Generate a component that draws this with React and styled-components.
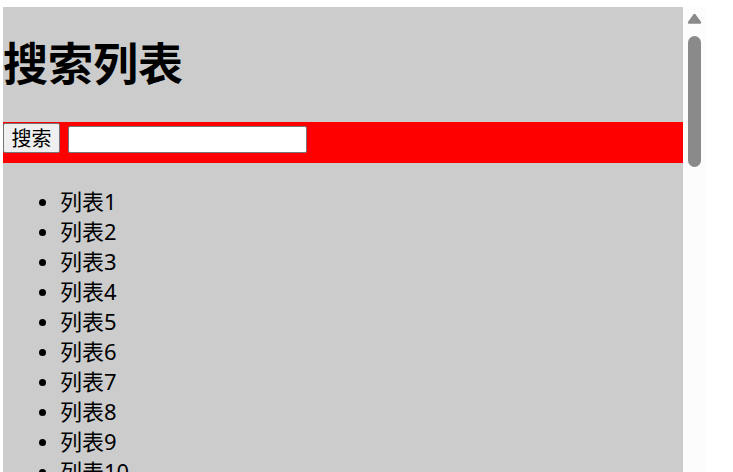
import React from 'react'
import styled, { createGlobalStyle } from 'styled-components'

const items = Array.from({ length: 12 }, (_, i) => `列表${i + 1}`)

const App = () => {
    return (
        <>
            <Global />
            <Frame>
                <Content>
                    <Title>搜索列表</Title>
                    <SearchBar>
                        <Button>搜索</Button>
                        <Input type="text" />
                    </SearchBar>
                    <List>
                        {items.map((t) => (
                            <li key={t}>{t}</li>
                        ))}
                    </List>
                </Content>
                <Rail>
                    <svg width="15" height="11" viewBox="0 0 15 11">
                        <path d="M2 9.5 L7.5 2 L13 9.5 Z" fill="#8a8a8a" stroke="#8a8a8a" strokeWidth="2.4" strokeLinejoin="round" />
                    </svg>
                    <Thumb />
                </Rail>
            </Frame>
        </>
    )
}

export default App

const Global = createGlobalStyle`
html, body {
    margin: 0;
    overflow: hidden;
    background: #fff;
}
body {
    font-family: "Noto Sans", "Noto Sans CJK SC", sans-serif;
}
`
const Frame = styled.div`
display: flex;
width: 703px;
height: 465px;
margin: 7px 0 0 3px;
`
const Content = styled.div`
flex: 1;
overflow: hidden;
background: #ccc;
`
const Rail = styled.div`
width: 23px;
display: flex;
flex-direction: column;
align-items: center;
background: #fcfcfc;
svg{
    display: block;
    margin-top: 6px;
}
`
const Thumb = styled.div`
width: 13px;
height: 131px;
margin-top: 12px;
border-radius: 7px;
background: #8a8a8a;
`
const Title = styled.h1`
margin: 27px 0 33px;
font-family: "Noto Sans CJK SC", sans-serif;
font-size: 45px;
line-height: 55px;
font-weight: 700;
color: #000;
`
const SearchBar = styled.div`
display: flex;
align-items: flex-end;
gap: 8px;
padding: 1px 0 10px;
background: #f00;
`
const Button = styled.button`
width: 57px;
height: 30px;
padding: 0;
font-family: "Noto Sans CJK SC", sans-serif;
font-size: 20px;
line-height: 28px;
color: #000;
background: #efefef;
border: 1px solid #767676;
border-radius: 2px;
`
const Input = styled.input`
box-sizing: border-box;
width: 239px;
height: 27px;
margin: 0;
background: #fff;
border: 1px solid #767676;
border-radius: 2px;
`
const List = styled.ul`
margin: 23px 0 20px;
padding-left: 57px;
font-size: 22px;
line-height: 30px;
color: #000;
li::marker{
    font-size: 20px;
}
`
